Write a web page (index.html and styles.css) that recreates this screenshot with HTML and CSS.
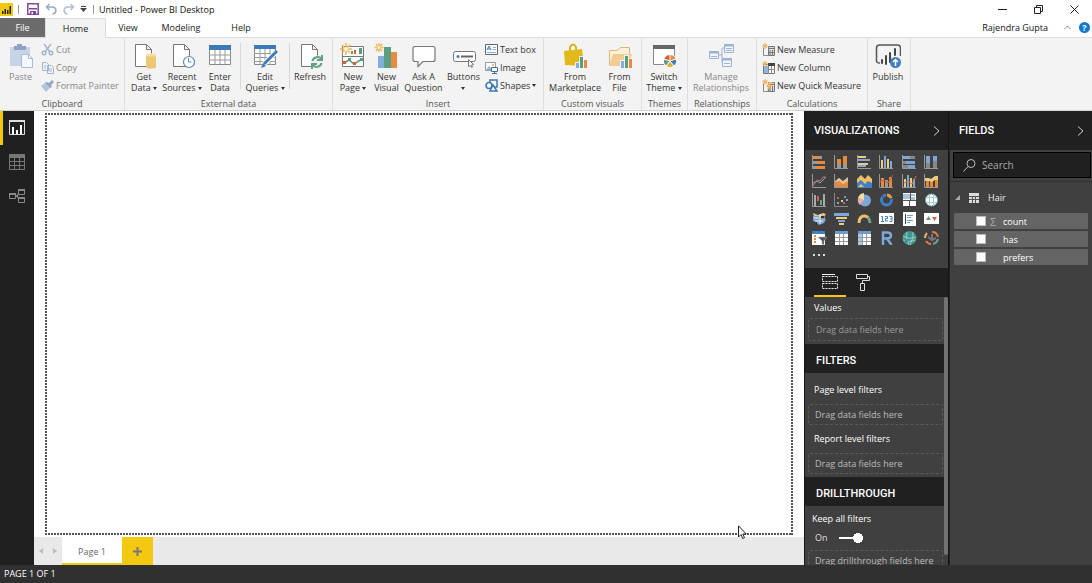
FILE: index.html
```html
<!DOCTYPE html>
<html lang="en">
<head>
<meta charset="utf-8">
<title>Untitled - Power BI Desktop</title>
<link rel="stylesheet" href="styles.css">
</head>
<body>
<div class="app">
<header class="titlebar">
  <svg class="logo" width="13" height="13" viewBox="0 0 13 13"><path fill="#f2c811" d="M0 0h13v13H0z"/><path fill="#222" d="M2 8h1.500v3H2zM4.500 6H6v5H4.500zM7 7h1.500v4H7zM9.500 3H11v8H9.500z"/></svg>
  <span class="bar"></span>
  <button class="tool" aria-label="Save"><svg width="12" height="12" viewBox="0 0 12 12"><path fill="none" stroke="#80479b" stroke-width="1.500" d="M.8.8h10.400v10.400H.8z"/><path fill="#80479b" d="M2 5h8v1.500H2zM3 8h6v3H3z"/><path fill="#fff" d="M4.500 9H6v2H4.500z"/></svg></button>
  <button class="tool" aria-label="Undo"><svg width="12" height="12" viewBox="0 0 12 12" fill="none" stroke="#9aa9c6" stroke-width="1.600"><path d="M4.500 1 1.500 4l3 3M1.500 4h5.500c5 0 5 6.500.5 7"/></svg></button>
  <button class="tool" aria-label="Redo"><svg width="12" height="12" viewBox="0 0 12 12" fill="none" stroke="#b4bfd4" stroke-width="1.600"><path d="m7.500 1 3 3-3 3M10.500 4H5C0 4 0 10.500 4.500 11"/></svg></button>
  <button class="tool tool-narrow" aria-label="Customize toolbar"><svg width="7" height="6" viewBox="0 0 7 6"><path fill="#444" d="M1 0h5v1H1zM0 2h7L3.500 6z"/></svg></button>
  <span class="bar"></span>
  <h1 class="title">Untitled - Power BI Desktop</h1>
  <div class="window-controls">
    <button aria-label="Minimize"><svg width="9" height="9" viewBox="0 0 9 9"><path stroke="#222" d="M0 4.500h9"/></svg></button>
    <button aria-label="Restore"><svg width="9" height="9" viewBox="0 0 9 9" fill="none" stroke="#222"><path d="M.5 2.500h6v6h-6zM2.500 2.500v-2h6v6h-2"/></svg></button>
    <button aria-label="Close"><svg width="9" height="9" viewBox="0 0 9 9"><path stroke="#222" d="m.5.5 8 8m0-8-8 8"/></svg></button>
  </div>
</header>
<nav class="tabs">
  <button class="tab tab-file">File</button><button class="tab tab-home">Home</button><button class="tab tab-view">View</button><button class="tab tab-modeling">Modeling</button><button class="tab tab-help">Help</button>
  <span class="user">Rajendra Gupta</span>
  <button class="mini" aria-label="Collapse ribbon"><svg width="7" height="5" viewBox="0 0 7 5"><path fill="none" stroke="#888" d="m.5 4 3-3 3 3"/></svg></button>
  <button class="help" aria-label="Help">?</button>
</nav>
<section class="ribbon">
  <div class="group g-clipboard"><div class="tools">
    <button class="big w-paste dim"><svg width="26" height="26" viewBox="0 0 26 26"><path fill="#c9d3e6" d="M2 4h20v19H2z"/><path fill="#8ea2c4" d="M6 3h3V1h5v2h4v4H6z"/><path fill="#f5f8fd" stroke="#adbdd9" d="M13.500 11.500h7l4 4v9h-11z"/><path fill="none" stroke="#adbdd9" d="M20.500 11.500v4h4"/></svg><span>Paste</span></button>
    <div class="list dim">
      <button><svg width="13" height="13" viewBox="0 0 13 13" fill="none" stroke="#a3b3cf" stroke-width="1.400"><path d="m3 1 6 8M10 1 4 9"/><circle cx="3" cy="10" r="1.800"/><circle cx="10" cy="10" r="1.800"/></svg>Cut</button>
      <button><svg width="13" height="13" viewBox="0 0 13 13" fill="#f0f4fb" stroke="#a3b3cf"><path d="M1.500 1.500h4l2 2v6h-6zM6.500 4.500h4l2 2v6h-6z"/><path d="M3 5h2M3 7h2M8 8h3M8 10h3"/></svg>Copy</button>
      <button><svg width="13" height="13" viewBox="0 0 13 13"><path fill="#8fa3c4" d="m11 1 2 2-3 3 1 2-2 1-5-5 1-1 3 1z"/><path fill="#b4c3dc" d="m4 4 5 5-4 4-5-6z"/></svg>Format Painter</button>
    </div></div><h2>Clipboard</h2></div>
  <div class="group g-external"><div class="tools">
    <button class="big w-38"><svg width="26" height="26" viewBox="0 0 26 26"><path fill="#fff" stroke="#777" d="M4.500 1.500h11l5 5v17h-16zM15.500 1.500v5h5"/><path fill="#ecc775" d="M15 12h10v12H15z"/><ellipse cx="20" cy="12" rx="5" ry="1.500" fill="#f7dfa3"/><ellipse cx="20" cy="24" rx="5" ry="1.500" fill="#ecc775"/></svg><span>Get<br>Data <i class="caret"></i></span></button>
    <button class="big w-38"><svg width="26" height="26" viewBox="0 0 26 26"><path fill="#fff" stroke="#777" d="M4.500 1.500h11l5 5v17h-16zM15.500 1.500v5h5"/><circle cx="20" cy="19" r="5.500" fill="#fff" stroke="#5d8ab8" stroke-width="1.200"/><path fill="none" stroke="#5d8ab8" d="M19.500 15v4h3"/></svg><span>Recent<br>Sources <i class="caret"></i></span></button>
    <button class="big w-38"><svg width="26" height="26" viewBox="0 0 26 26"><path fill="#fff" stroke="#888" d="M2.500 3.500h21v18h-21z"/><path fill="#3d7ab8" d="M2 2h22v5H2z"/><path stroke="#999" d="M2 12h22M2 17h22M8 7v14M13 7v14M18 7v14"/></svg><span>Enter<br>Data</span></button>
    <span class="divider"></span>
    <button class="big w-46"><svg width="26" height="26" viewBox="0 0 26 26"><path fill="#fff" stroke="#888" d="M2.500 3.500h21v18h-21z"/><path fill="#3d7ab8" d="M2 2h22v4H2z"/><path stroke="#999" d="M2 10.500h22M2 14.500h22M2 18.500h22M8 6v16M13 6v16M18 6v16"/><path stroke="#fff" stroke-width="5" d="M24 9 11 22"/><path stroke="#3d7ab8" stroke-width="3" d="M25 8 12 21"/><path fill="#3d7ab8" d="m11 20 3 3-5 2z"/></svg><span>Edit<br>Queries <i class="caret"></i></span></button>
    <span class="divider"></span>
    <button class="big w-38"><svg width="26" height="26" viewBox="0 0 26 26"><path fill="#fff" stroke="#777" d="M4.500 1.500h11l5 5v17h-16zM15.500 1.500v5h5"/><circle cx="20" cy="19" r="6.500" fill="#f3f3f3"/><path fill="none" stroke="#61a283" stroke-width="2" d="M15.500 18c1-4.500 7-5 8.500-2M24.500 20c-1 4.500-7 5-8.500 2M25 12v5h-5M15 26v-5h5"/></svg><span>Refresh</span></button>
    </div><h2>External data</h2></div>
  <div class="group g-insert"><div class="tools">
    <button class="big w-40"><svg width="26" height="26" viewBox="0 0 26 26"><path fill="#fff" stroke="#777" d="M2.500 3.500h21v20h-21zM2 13.500h22"/><path fill="#d85b35" d="M14 7h2v4h-2z"/><path fill="#54a07e" d="M11 8h2v3h-2zM19 5h3v6h-3z"/><path fill="none" stroke="#54a07e" stroke-width="1.500" d="m4 20 5-3 5 4 8-5"/><path fill="#d85b35" d="M3 18h3v3H3zM13 19h3v3h-3z"/><path fill="#54a07e" d="M8 15h3v3H8zM20 15h3v3h-3z"/><path stroke="#edb653" stroke-width="1.500" d="M6 0v12M0 6h12M2 2l8 8M10 2l-8 8"/><circle cx="6" cy="6" r="2" fill="#fff6df"/></svg><span>New<br>Page <i class="caret"></i></span></button>
    <button class="big w-27"><svg width="26" height="26" viewBox="0 0 26 26"><path fill="#84aedb" d="M4 13h6v12H4z"/><path fill="#5b9f82" d="M10 4h7v21h-7z"/><path fill="#e88a3f" d="M17 9h6v16h-6z"/><path stroke="#edb653" stroke-width="1.300" d="M5 0v9M.5 4.500h9M2 1l6 7M8 1 2 8"/><circle cx="5" cy="4.500" r="1.500" fill="#fff6df"/></svg><span>New<br>Visual</span></button>
    <button class="big w-47"><svg width="26" height="26" viewBox="0 0 26 26"><path fill="#fff" stroke="#777" stroke-width="1.200" d="M4 3.500h18q2 0 2 2v11q0 2-2 2H12l-5 5v-5H4q-2 0-2-2v-11q0-2 2-2z"/></svg><span>Ask A<br>Question</span></button>
    <button class="big w-33"><svg width="26" height="26" viewBox="0 0 26 26"><rect x="2.500" y="8.500" width="22" height="10" rx="2" fill="#fff" stroke="#777"/><circle cx="7" cy="13.500" r="1.500" fill="#3d7ab8"/><path stroke="#666" stroke-width="2" d="M10 13.500h12"/><path fill="#fff" stroke="#777" d="m17.500 16.500 5 5-2 .5 1 2-1 .5-1-2-2 1z"/></svg><span>Buttons<br><i class="caret"></i></span></button>
    <div class="list">
      <button><svg width="13" height="13" viewBox="0 0 13 13"><path fill="#fff" stroke="#666" d="M.5 1.500h12v10H.5z"/><path fill="none" stroke="#3d7ab8" d="m2 7 2-4 2 4M3 6h2"/><path stroke="#89afd5" d="M8 4.500h3M8 6.500h3M2 9.500h9"/></svg>Text box</button>
      <button><svg width="13" height="13" viewBox="0 0 13 13"><path fill="#fff" stroke="#999" d="M.5 1.500h10v8H.5z"/><path fill="#90b5d8" d="m1 9 3-4 4 4z"/><circle cx="8" cy="4" r="1" fill="#e6a651"/><path fill="#fff" stroke="#3d6fa5" d="M6.500 6.500h6v4h-6zM7 12.500h5M9.500 10v2"/></svg>Image</button>
      <button><svg width="13" height="13" viewBox="0 0 13 13" fill="#fff" stroke="#3d75b5" stroke-width="1.500"><path d="M5 1h7v7H5z"/><circle cx="4" cy="6.500" r="3"/><path d="m8 6 4 6H5z"/></svg>Shapes <i class="caret"></i></button>
    </div></div><h2>Insert</h2></div>
  <div class="group g-custom"><div class="tools">
    <button class="big w-60"><svg width="26" height="26" viewBox="0 0 26 26"><path fill="none" stroke="#d8b31d" stroke-width="2" d="M8 9V4q3-5 6 0v5"/><path fill="#e2b91b" d="m2 8 18-2 2 17-19-1z"/><path fill="#f3f3f3" d="M13 19h4v-6h5v3h4v10H13z"/><path fill="#84aedb" d="M14 20h3v5h-3z"/><path fill="#5b9f82" d="M18 14h3v11h-3z"/><path fill="#e88a3f" d="M22 17h3v8h-3z"/></svg><span>From<br>Marketplace</span></button>
    <button class="big w-27"><svg width="26" height="26" viewBox="0 0 26 26"><path fill="#fff0d8" stroke="#e0b477" d="M2.500 22V7.500h8l3-3h9V22z"/><path fill="#f1cc91" d="m2 23 4-12h19l-4 12z"/><path fill="#f3f3f3" d="M13 17h4v-5h5v3h4v11H13z"/><path fill="#84aedb" d="M14 18h3v7h-3z"/><path fill="#5b9f82" d="M18 13h3v12h-3z"/><path fill="#e88a3f" d="M22 16h3v9h-3z"/></svg><span>From<br>File</span></button>
    </div><h2>Custom visuals</h2></div>
  <div class="group g-themes"><div class="tools">
    <button class="big w-44"><svg width="26" height="26" viewBox="0 0 26 26"><path fill="#fff" stroke="#888" d="M2.500 3.500h21v18h-21z"/><path fill="#666" d="M2 2h22v4H2z"/><circle cx="19" cy="18" r="7" fill="#fff"/><path fill="#e88a3f" d="M19 18v-6a6 6 0 0 1 5.700 4z"/><path fill="#3d7ab8" d="m19 18 5.700-2a6 6 0 0 1-2 6.800z"/><path fill="#dfb23a" d="m19 18 3.700 4.800a6 6 0 0 1-7.400 0z"/><path fill="#5b9f82" d="m19 18-3.700 4.800A6 6 0 0 1 13.300 16z"/><path fill="#d85b35" d="m19 18-5.700-2A6 6 0 0 1 19 12z"/><path fill="none" stroke="#fff" d="M19 11v7m6-2-6 2 4 5m-4-5-4 5m4-5-6-2"/></svg><span>Switch<br>Theme <i class="caret"></i></span></button>
    </div><h2>Themes</h2></div>
  <div class="group g-relations"><div class="tools">
    <button class="big w-66 dim"><svg width="26" height="26" viewBox="0 0 26 26" fill="#f1f5fd" stroke="#9fb2d4"><path d="M10 12h4V5h3M14 12v8h3" fill="none"/><path d="M16.500 1.500h9v8h-9zM1.500 8.500h9v7h-9zM14.500 15.500h9v8h-9z"/><path stroke-width="2" d="M16 2.500h10M1 9.500h10M14 16.500h10"/><path d="M18 5.500h6M18 7.500h6M3 13.500h6M16 20.500h6"/></svg><span>Manage<br>Relationships</span></button>
    </div><h2>Relationships</h2></div>
  <div class="group g-calc"><div class="tools">
    <div class="list">
      <button><svg width="13" height="13" viewBox="0 0 13 13"><path fill="none" stroke="#888" d="M1.500 5v7.500h5"/><path fill="#ddd" stroke="#777" d="M6.500 3.500h6v9h-6z"/><path stroke="#777" d="M7 5.500h5M8 7v5M10.500 7v5M7 9.500h5"/><path stroke="#edae5b" d="M3 0v6M0 3h6M1 1l4 4M5 1 1 5"/></svg>New Measure</button>
      <button><svg width="13" height="13" viewBox="0 0 13 13"><path fill="#fff" stroke="#777" d="M1.500 3.500h11v9h-11z"/><path fill="#8cb8de" d="M2 5h4v7H2z"/><path fill="#444" d="M6 2h7v3H6z"/><path stroke="#888" d="M6.500 5v8M9.500 5v8M6 8.500h7"/><path stroke="#edae5b" d="M3 0v6M0 3h6M1 1l4 4M5 1 1 5"/></svg>New Column</button>
      <button><svg width="13" height="13" viewBox="0 0 13 13"><path fill="none" stroke="#888" d="M1.500 5v7.500h5"/><path fill="#ddd" stroke="#777" d="M6.500 3.500h6v9h-6z"/><path stroke="#777" d="M7 5.500h5M8 7v5M10.500 7v5"/><path fill="#efb45c" d="M7 3h4L8 6h2l-5 6 1-4H4z"/><path stroke="#edae5b" d="M3 0v6M0 3h6M1 1l4 4M5 1 1 5"/></svg>New Quick Measure</button>
    </div></div><h2>Calculations</h2></div>
  <div class="group g-share"><div class="tools">
    <button class="big w-40"><svg width="26" height="26" viewBox="0 0 26 26"><path fill="none" stroke="#555" stroke-width="1.500" d="M5 20q-4 0-3.500-3V5q0-3 3-3h18q3 0 3 3v8"/><path stroke="#444" stroke-width="2" stroke-linecap="round" d="M7 17v3M11 13v8M15 10v9M20 6v6"/><circle cx="20.500" cy="19.500" r="5.500" fill="#3e7ebf"/><path fill="none" stroke="#fff" stroke-width="1.500" d="M20.500 23v-6M18 19l2.500-2.500L23 19"/></svg><span>Publish</span></button>
    </div><h2>Share</h2></div>
</section>
<main class="workspace">
  <nav class="rail">
    <button class="active" aria-label="Report"><svg width="16" height="16" viewBox="0 0 16 16"><path fill="none" stroke="#ddd" d="M.5 1.500h15v13H.5z"/><path stroke="#ddd" d="M0 1h16" stroke-width="2"/><path fill="#fff" d="M3 7h2v7H3zM7 10h2v4H7zM11 5h2v9h-2z"/></svg></button>
    <button aria-label="Data"><svg width="16" height="16" viewBox="0 0 16 16"><path fill="none" stroke="#777" d="M.5.5h15v15H.5zM0 7.500h16M0 11.500h16M5.500 4v12M10.500 4v12"/><path fill="#777" d="M0 0h16v4H0z"/></svg></button>
    <button aria-label="Relationships"><svg width="16" height="16" viewBox="0 0 16 16" fill="none" stroke="#888"><path d="M.5 5.500h6v5h-6zM9.500 1.500h6v5h-6zM9.500 9.500h6v5h-6zM7 7.500h2V5M7 8.500h2v2"/><path stroke-width="2" d="M0 6h7M9 2h7M9 10h7"/></svg></button>
  </nav>
  <section class="report">
    <div class="canvas"><svg class="pointer" width="9" height="14" viewBox="0 0 9 14"><path fill="#fff" stroke="#222" d="M.5.8v11.200l2.500-2.500 1.700 4 1.800-.8-1.700-3.700h3.500z"/></svg></div>
    <nav class="pages">
      <button class="arrow" aria-label="Previous page"><svg width="4" height="6" viewBox="0 0 4 6"><path fill="#bbb" d="M4 0v6L0 3z"/></svg></button>
      <button class="arrow" aria-label="Next page"><svg width="4" height="6" viewBox="0 0 4 6"><path fill="#bbb" d="M0 0v6l4-3z"/></svg></button>
      <button class="page">Page 1</button>
      <button class="add" aria-label="Add page"><svg width="9" height="9" viewBox="0 0 9 9"><path stroke="#777" stroke-width="2" d="M4.500 0v9M0 4.500h9"/></svg></button>
    </nav>
  </section>
  <aside class="pane viz">
    <header class="pane-head"><h2>VISUALIZATIONS</h2><button aria-label="Collapse visualizations"><svg width="7" height="10" viewBox="0 0 7 10"><path fill="none" stroke="#ccc" d="m1 .5 5 4.500-5 4.500"/></svg></button></header>
    <div class="gallery">
      <button aria-label="Stacked bar chart"><svg viewBox="0 0 15 14"><path stroke="#999" d="M.5 0v14"/><path fill="#e58a3d" d="M1 1h6v3H1zM5 6h8v3H5zM4 11h9v3H4z"/><path fill="#999" d="M7 1h3v3H7zM1 6h4v3H1zM1 11h3v3H1z"/></svg></button>
      <button aria-label="Stacked column chart"><svg viewBox="0 0 15 14"><path fill="none" stroke="#999" d="M.5 0v13.500H14"/><path fill="#e58a3d" d="M3 4h4v5H3zM9 1h4v8H9z"/><path fill="#999" d="M3 9h4v4H3zM9 9h4v4H9z"/></svg></button>
      <button aria-label="Clustered bar chart"><svg viewBox="0 0 15 14"><path fill="none" stroke="#999" d="M.5 0v13.500H14"/><path fill="#efcc7d" d="M1 1h8v2H1zM1 8h10v2H1z"/><path fill="#7da7d9" d="M1 4h12v2H1zM1 10h8v2H1z"/></svg></button>
      <button aria-label="Clustered column chart"><svg viewBox="0 0 15 14"><path fill="none" stroke="#999" d="M.5 0v13.500H14"/><path fill="#efcc7d" d="M2 5h2v8H2zM8 4h2v9H8z"/><path fill="#7da7d9" d="M5 1h2v12H5zM11 6h2v7h-2z"/></svg></button>
      <button aria-label="100% stacked bar chart"><svg viewBox="0 0 15 14"><path fill="none" stroke="#999" d="M.5 0v13.500H14"/><path fill="#7da7d9" d="M1 1h7v3H1zM4 6h9v3H4z"/><path fill="#888" d="M8 1h5v3H8zM1 6h3v3H1zM1 10h5v3H1z"/><path fill="#7da7d9" d="M6 10h7v3H6z"/></svg></button>
      <button aria-label="100% stacked column chart"><svg viewBox="0 0 15 14"><path fill="none" stroke="#999" d="M.5 0v13.500H14"/><path fill="#7da7d9" d="M2 1h4v7H2zM9 1h4v5H9z"/><path fill="#888" d="M2 8h4v5H2zM9 6h4v7H9z"/></svg></button>
      <button aria-label="Line chart"><svg viewBox="0 0 15 14" fill="none"><path stroke="#999" d="M.5 0v13.500H14"/><path stroke="#7da7d9" d="m1 9 4-2 3 2 6-6"/><path stroke="#c56e5e" d="m1 12 4-6 3 1 3-4h3"/></svg></button>
      <button aria-label="Area chart"><svg viewBox="0 0 15 14"><path fill="#aac4df" d="m1 7 4-3 4 3 5-4v10H1z"/><path fill="#e58a3d" d="m1 8 4-1 4 3 5-3v6H1z"/><path fill="#efbf74" d="m1 8 4-4 4 4 5-4v3l-5 3-4-3z"/><path fill="none" stroke="#999" d="M.5 0v13.500H14"/></svg></button>
      <button aria-label="Stacked area chart"><svg viewBox="0 0 15 14"><path fill="#efbf65" d="m0 5 4-4 4 4 3-4 4 4v9H0z"/><path fill="#3f7fc4" d="m0 9 4-3 4 4 3-3 4 2v5H0z"/><path fill="#efbf65" d="m1 13 3-3 3 3z"/></svg></button>
      <button aria-label="Line and stacked column chart"><svg viewBox="0 0 15 14"><path fill="none" stroke="#999" d="M.5 0v13.500H14"/><path fill="#e58a3d" d="M2 4h3v9H2zM10 3h3v10h-3z"/><path fill="#999" d="M6 6h3v7H6z"/><path stroke="#c85c40" fill="none" d="m1 8 4-2 4 3 5-8"/></svg></button>
      <button aria-label="Line and clustered column chart"><svg viewBox="0 0 15 14"><path fill="none" stroke="#999" d="M.5 0v13.500H14"/><path fill="#efcc7d" d="M2 5h2v8H2zM8 4h2v9H8z"/><path fill="#7da7d9" d="M5 1h2v12H5zM11 5h2v8h-2z"/><path stroke="#d87550" fill="none" d="m2 9 4-2 4 3 4-8"/></svg></button>
      <button aria-label="Ribbon chart"><svg viewBox="0 0 15 14"><path fill="#e58a3d" d="M2 6h3v7H2zM6 7h3v6H6zM11 6h3v7h-3z"/><path fill="#efcc7d" d="M1 4h4l2 1 4-3h3v4h-3L8 8 5 7H1z"/><path fill="none" stroke="#999" d="M.5 0v13.500H14"/></svg></button>
      <button aria-label="Waterfall chart"><svg viewBox="0 0 15 14"><path fill="#aaa" d="M2 2h2v11H2zM11 1h2v12h-2z"/><path fill="#6fa58a" d="M8 7h2v5H8z"/><path fill="#cc634c" d="M5 3h2v5H5z"/><path fill="none" stroke="#999" d="M.5 0v13.500H14"/></svg></button>
      <button aria-label="Scatter chart"><svg viewBox="0 0 15 14"><path fill="none" stroke="#888" d="M.5 0v13.500H14"/><path fill="#cc634c" d="M3 4h2v2H3zM9 9h2v2H9z"/><path fill="#efcc7d" d="M7 7h2v2H7z"/><path fill="#6fa58a" d="M10 3h2v2h-2z"/><path fill="#7da7d9" d="M3 9h2v2H3zM12 6h2v2h-2z"/></svg></button>
      <button aria-label="Pie chart"><svg viewBox="0 0 15 14"><circle cx="8" cy="7.500" r="6" fill="#7da7d9"/><path fill="#f3dcaa" d="M7 7V0a7 7 0 0 0-6 5z"/><path fill="#e8b0a0" d="M7 7 1 5q-1 4 2 7z"/></svg></button>
      <button aria-label="Donut chart"><svg viewBox="0 0 15 14" fill="none"><circle cx="7.500" cy="7" r="5" stroke="#3f7fc4" stroke-width="3"/><path stroke="#e0a14f" stroke-width="3" d="M7.500 2A5 5 0 0 1 12 5"/><path stroke="#404040" d="M7.500 0v4M15 5l-4 1M1 1l3 3"/></svg></button>
      <button aria-label="Treemap"><svg viewBox="0 0 15 14"><path fill="#fff" d="M1 0h13v13H1z"/><path fill="#aac4df" d="M1 1h7v5H1zM9 1h4v2H9zM9 4h4v3H9z"/><path stroke="#555" d="M1 7.500h13M7.500 8v5M8.500 0v7"/></svg></button>
      <button aria-label="Map"><svg viewBox="0 0 15 14"><circle cx="7.500" cy="7" r="6" fill="#fff" stroke="#72a7c0"/><path fill="none" stroke="#a9cfd0" d="M2 4.500h11M2 9.500h11M5.500 1v12M9.500 1v12"/></svg></button>
      <button aria-label="Filled map"><svg viewBox="0 0 15 14"><path fill="#dcc58a" d="m1 1 5 2 5-2 3 1-2 3H2z"/><path fill="#7da7d9" d="M1 4h6v3h7l-2 4-5 2-3-3-3-1z"/><path stroke="#eee" fill="none" d="M2 6h11M3 9h8M8 2v10"/><path fill="#333" d="M9 4h3v2H9zM3 10h2v3z"/></svg></button>
      <button aria-label="Funnel"><svg viewBox="0 0 15 14"><path fill="#7da7d9" d="M0 1h15v3H0zM4 8h7v2H4z"/><path fill="#efcc7d" d="M2 5h11v2H2zM5 11h5v2H5z"/></svg></button>
      <button aria-label="Gauge"><svg viewBox="0 0 15 14" fill="none" stroke-width="3"><path stroke="#efc06c" d="M2 11q0-7 5.500-7 2 0 3.500 1.500"/><path stroke="#6fa58a" d="M11 5.500q2 2 2 5.500"/></svg></button>
      <button aria-label="Card"><svg viewBox="0 0 15 14"><path fill="#fff" d="M0 1h15v11H0z"/><path fill="none" stroke="#3f7fc4" d="M2 4.500h1.500V9M2 9.500h3M6 4.500h2.500v2H6.500v2.500H9M10.500 4.500H13v5h-2.500M11 7h2"/></svg></button>
      <button aria-label="Multi-row card"><svg viewBox="0 0 15 14"><path fill="#fff" d="M1 0h13v14H1z"/><path stroke="#444" d="M3.500 2v10"/><path stroke="#6c9bcd" d="M5 3.500h6M5 5.500h4M5 8.500h6M5 10.500h3"/></svg></button>
      <button aria-label="KPI"><svg viewBox="0 0 15 14"><path fill="#fff" d="M0 1h15v11H0z"/><path fill="#5c9c7b" d="m2 8 2.500-4L7 8z"/><path fill="#cc634c" d="M8 5h5l-2.500 4z"/></svg></button>
      <button aria-label="Slicer"><svg viewBox="0 0 15 14"><path fill="#fff" d="M0 0h13v14H0z"/><path fill="#3f7fc4" d="M0 0h13v3H0z"/><path stroke="#e58a3d" stroke-width="2" d="M2 5h2M2 8h2M2 11h2"/><path fill="#555" stroke="#bbb" stroke-width=".5" d="M6 6h9l-3 4v4l-2-1v-3z"/></svg></button>
      <button aria-label="Table"><svg viewBox="0 0 15 14"><path fill="#fff" d="M1 0h13v14H1z"/><path fill="#6c9bcd" d="M1 0h13v3H1z"/><path stroke="#999" d="M1 6.500h13M1 10.500h13M5.500 3v11M9.500 3v11"/></svg></button>
      <button aria-label="Matrix"><svg viewBox="0 0 15 14"><path fill="#fff" d="M1 0h13v14H1z"/><path fill="#a9c9e9" d="M1 0h5v14H1z"/><path fill="#6c9bcd" d="M1 0h13v3H1z"/><path stroke="#999" d="M1 6.500h13M1 10.500h13M5.500 3v11M9.500 3v11"/></svg></button>
      <button aria-label="R script visual"><svg viewBox="0 0 15 14"><path fill="none" stroke="#7da7d9" stroke-width="2.500" d="M4 14V1.500h4q4 0 4 3t-4 3H4m4 0 4.500 6.500"/></svg></button>
      <button aria-label="ArcGIS map"><svg viewBox="0 0 15 14"><circle cx="7.500" cy="7" r="7" fill="#3c9a87"/><path stroke="#cfdad8" fill="none" stroke-width=".7" d="M1 5q6 4 13 1M1 9q7 3 12 0M5 1q-2 6 2 13M11 1q1 6-3 13"/><path fill="#4289c0" d="M7 3h3v3H7zM3 8h3v3H3z"/></svg></button>
      <button aria-label="Custom visual"><svg viewBox="0 0 15 14" fill="none" stroke-width="2"><path stroke="#e07a4c" d="M8 1q5 0 6 5M2 10q2 3 5 3"/><path stroke="#6fa58a" d="M14 8q-1 4-5 5"/><path stroke="#e5b36d" d="M1 7q0-3 2-5"/><path stroke="#777" d="m4 6 4 3 4-2M8 3v6"/></svg></button>
      <button aria-label="More visuals"><svg viewBox="0 0 15 14"><path fill="#ddd" d="M1 4h2v2H1zM6 4h2v2H6zM11 4h2v2h-2z"/></svg></button>
    </div>
    <div class="modes">
      <button class="selected" aria-label="Fields"><svg width="18" height="17" viewBox="0 0 18 17" fill="none" stroke="#eee"><path d="M1 1.500h13"/><path stroke-dasharray="2 1" d="M1.500 3.500h15v5h-15zM1.500 10.500h15v5h-15z"/></svg></button>
      <button aria-label="Format"><svg width="15" height="17" viewBox="0 0 15 17" fill="none" stroke="#ddd"><path d="M1.500.5h11v4h-11zM12.500 2.500h2v4H7.500v3M5.500 9.500h4v7h-4z"/></svg></button>
    </div>
    <div class="wells">
      <div class="well first"><h3>Values</h3><div class="drop faint">Drag data fields here</div></div>
      <h2 class="section">FILTERS</h2>
      <div class="well"><h3>Page level filters</h3><div class="drop">Drag data fields here</div><h3>Report level filters</h3><div class="drop">Drag data fields here</div></div>
      <h2 class="section">DRILLTHROUGH</h2>
      <div class="well drill"><h3 id="keep">Keep all filters</h3>
        <label class="switch">On <input type="checkbox" checked aria-labelledby="keep"></label>
        <div class="drop">Drag drillthrough fields here</div></div>
      <span class="scrollbar"></span>
    </div>
  </aside>
  <aside class="pane fields">
    <header class="pane-head"><h2>FIELDS</h2><button aria-label="Collapse fields"><svg width="7" height="10" viewBox="0 0 7 10"><path fill="none" stroke="#ccc" d="m1 .5 5 4.500-5 4.500"/></svg></button></header>
    <div class="search-area"><label class="search"><svg width="13" height="13" viewBox="0 0 13 13" fill="none" stroke="#bbb"><circle cx="8" cy="4.500" r="4"/><path d="M5 7.500.5 12.500"/></svg><input type="text" placeholder="Search" aria-label="Search fields"></label></div>
    <div class="table-row"><svg width="5" height="5" viewBox="0 0 5 5"><path fill="#aaa" d="M5 0v5H0z"/></svg><svg width="10" height="10" viewBox="0 0 10 10"><path fill="#ddd" d="M0 0h10v10H0z"/><path stroke="#555" d="M0 3.500h10M0 6.500h10M3.500 3v7M6.500 3v7"/></svg><span>Hair</span></div>
    <div class="columns">
      <label><input type="checkbox"><span class="sigma">Σ</span>count</label>
      <label><input type="checkbox"><span class="sigma"></span>has</label>
      <label><input type="checkbox"><span class="sigma"></span>prefers</label>
    </div>
  </aside>
</main>
<footer class="status">PAGE 1 OF 1</footer>
</div>
</body>
</html>
```
FILE: styles.css
```css
* { box-sizing: border-box; }
body { margin: 0; font: 9px/11px "Open Sans", "Noto Sans", sans-serif; color: #333; background: #fff; }
button, input { font: inherit; color: inherit; }
button { border: 0; padding: 0; background: none; white-space: nowrap; }
h1, h2, h3 { margin: 0; font-size: inherit; font-weight: 400; }
svg { display: block; flex: none; }
.app { height: 100vh; display: flex; flex-direction: column; overflow: hidden; }

.titlebar { display: flex; align-items: center; height: 18px; flex: none; }
.bar { width: 1px; height: 9px; margin: 0 5px; background: #999; }
.tool { width: 18px; display: grid; place-items: center; }
.tool-narrow { width: 10px; }
.title { color: #111; }
.window-controls { margin-left: auto; display: flex; }
.window-controls button { width: 36px; display: grid; place-items: center; }

.tabs { display: flex; height: 20px; flex: none; align-items: stretch; color: #222; border-bottom: 1px solid #ddd; }
.tab-file { width: 45px; background: #6b6b6b; color: #fff; }
.tab-home { width: 61px; background: #f3f3f3; border: 1px solid #ddd; border-bottom: 0; margin-bottom: -1px; }
.tab-view { width: 44px; }
.tab-modeling { width: 62px; }
.tab-help { width: 58px; }
.user { margin-left: auto; align-self: center; color: #111; }
.mini { width: 31px; display: grid; place-items: center; padding-left: 8px; }
.help { width: 11px; height: 11px; align-self: center; margin-right: 2px; border-radius: 50%; background: #1277d1; color: #fff; font-weight: 700; }

.ribbon { display: flex; height: 73px; flex: none; background: #f3f3f3; border-bottom: 1px solid #d5d5d5; }
.group { display: flex; flex-direction: column; padding: 5px 0 1px; border-right: 1px solid #dedede; flex: none; }
.group h2 { text-align: center; color: #555; }
.tools { flex: 1; display: flex; align-items: flex-start; }
.g-clipboard { width: 125px; }
.g-external { width: 208px; }
.g-insert { width: 211px; }
.g-custom { width: 98px; }
.g-themes { width: 46px; }
.g-relations { width: 69px; }
.g-calc { width: 111px; }
.g-share { width: 43px; }
.big { display: flex; flex-direction: column; align-items: center; gap: 2px; line-height: 11px; }
.w-paste { width: 41px; }
.w-27 { width: 27px; }
.w-33 { width: 33px; }
.w-38 { width: 38px; }
.w-40 { width: 40px; }
.w-44 { width: 44px; }
.w-46 { width: 46px; }
.w-47 { width: 47px; }
.w-60 { width: 62px; }
.w-66 { width: 66px; }
.list { display: flex; flex-direction: column; align-items: flex-start; gap: 5px; }
.list button { display: flex; align-items: center; gap: 2px; }
.g-insert .list, .g-calc .list { padding-left: 5px; }
.dim { color: #888; }
.caret { display: inline-block; vertical-align: middle; border: 2px solid transparent; border-top: 3px solid #333; border-bottom: 0; }
.divider { width: 1px; height: 46px; background: #d8d8d8; margin: 0 1px; }

.workspace { flex: 1; min-height: 0; display: flex; }
.rail { width: 34px; flex: none; background: #202020; display: flex; flex-direction: column; }
.rail button { height: 34px; display: grid; place-items: center; border-left: 3px solid transparent; padding-right: 3px; }
.rail .active { border-color: #f2c811; }
.report { flex: 1; min-width: 0; display: flex; flex-direction: column; }
.canvas {
  --dot: #555 0 2px, transparent 2px 3px;
  position: relative; flex: 1; margin: 2px 11px;
  background:
    repeating-linear-gradient(90deg, var(--dot)) top / 100% 2px no-repeat,
    repeating-linear-gradient(90deg, var(--dot)) bottom / 100% 2px no-repeat,
    repeating-linear-gradient(var(--dot)) left / 2px 100% no-repeat,
    repeating-linear-gradient(var(--dot)) right / 2px 100% no-repeat;
}
.pointer { position: absolute; right: 46px; bottom: -4px; }
.pages { height: 28px; flex: none; display: flex; background: #e9e9e9; }
.arrow { width: 14px; display: grid; place-items: center; }
.page { width: 60px; background: #fff; border-bottom: 2px solid #f2c811; color: #666; padding-top: 2px; }
.add { width: 31px; background: #f2c811; display: grid; place-items: center; }

.pane { flex: none; display: flex; flex-direction: column; background: #404040; color: #ddd; min-height: 0; }
.viz { width: 145px; border: 0 solid #151515; border-width: 0 1px; }
.fields { width: 143px; border-left: 1px solid #222; }
.pane-head { height: 39px; flex: none; background: #202020; display: flex; align-items: center; justify-content: space-between; padding: 0 8px 0 9px; }
.pane-head h2, .section { font: 500 11px/14px Roboto, sans-serif; color: #fff; }
.gallery { display: grid; grid-template-columns: repeat(6, 1fr); grid-auto-rows: 19px; padding: 2px 5px 0 3px; height: 118px; flex: none; }
.gallery button { display: grid; place-items: center; }
.gallery svg { width: 15px; height: 14px; }
.modes { height: 29px; flex: none; display: flex; background: #202020; padding-left: 9px; }
.modes button { width: 32px; display: grid; place-items: center; }
.modes .selected { border-bottom: 2px solid #f2c811; }
.wells { position: relative; flex: 1; min-height: 0; overflow: hidden; padding-right: 5px; }
.well { padding: 12px 0 3px 3px; }
.well h3 { padding-left: 6px; line-height: 10px; color: #fff; }
.first { padding-top: 6px; }
.drop { border: 1px dashed #5c5c5c; border-radius: 2px; height: 21px; margin: 9px 0; padding-left: 6px; line-height: 19px; white-space: nowrap; color: #bbb; }
.well .drop:last-child { margin-bottom: 0; }
.first .drop { margin-top: 5px; height: 23px; line-height: 21px; padding-left: 7px; }
.first .faint { color: #999; }
.section { background: #202020; height: 29px; line-height: 34px; padding-left: 11px; margin-right: -1px; }
.drill { padding-top: 8px; }
.drill h3 { padding-left: 4px; }
.drill .drop { margin-top: 7px; }
.switch { display: flex; align-items: center; gap: 11px; padding-left: 7px; margin-top: 8px; }
.switch input { appearance: none; margin: 0; width: 24px; height: 10px; background: radial-gradient(circle at 19px 5px, #fff 5px, transparent 5px), linear-gradient(#fff, #fff) 0 4px / 20px 2px no-repeat; }
.scrollbar { position: absolute; top: 0; right: 0; width: 4px; height: 258px; border-radius: 2px; background: #737373; }

.search-area { padding: 2px 1px 3px 3px; border-bottom: 1px solid #303030; }
.search { display: flex; align-items: center; gap: 6px; height: 26px; padding-left: 9px; border: 1px solid #000; background: #202020; }
.search input { min-width: 0; flex: 1; border: 0; padding: 0; background: none; font-size: 10px; }
.search input::placeholder { color: #aaa; }
.table-row { display: flex; align-items: center; height: 31px; padding-left: 5px; gap: 9px; color: #eee; }
.columns { display: flex; flex-direction: column; gap: 2px; padding: 0 4px; }
.columns label { display: flex; align-items: center; height: 16px; padding-left: 22px; background: #646464; border-radius: 1px; color: #fff; }
.columns input { appearance: none; width: 10px; height: 10px; margin: 0; background: #fff; border: 1px solid #bbb; }
.sigma { width: 17px; padding-left: 4px; font-size: 11px; color: #aaa; }
.status { height: 18px; flex: none; background: #303030; color: #fff; padding-left: 4px; line-height: 18px; }
```
